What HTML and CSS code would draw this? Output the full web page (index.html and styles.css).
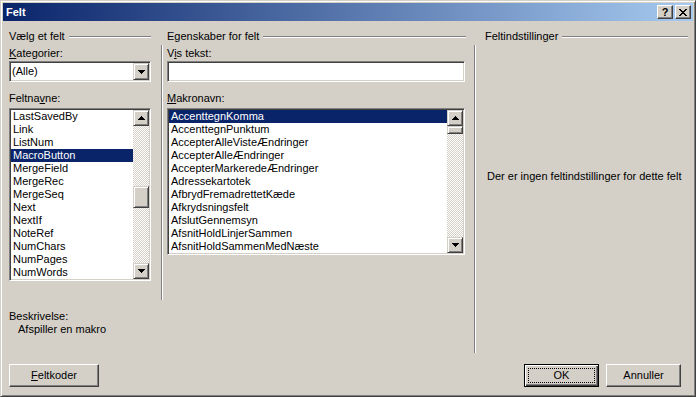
FILE: index.html
```html
<!DOCTYPE html>
<html lang="da">
<head>
    <meta charset="UTF-8">
    <title>Felt</title>
    <link rel="stylesheet" href="styles.css">
</head>
<body>
    <div class="window">
        <div class="titlebar">
            <span class="title">Felt</span>
            <div class="caption-btns">
                <button class="cap-btn help">?</button>
                <button class="cap-btn">
                    <svg width="8" height="7" viewBox="0 0 8 7" shape-rendering="crispEdges"><path d="M0 0h2v1h1v1h2V1h1V0h2v1H7v1H6v1H5v1h1v1h1v1h1v1H6V6H5V5H3v1H2v1H0V6h1V5h1V4h1V3H2V2H1V1H0z" fill="#000"/></svg>
                </button>
            </div>
        </div>

        <div class="content">
            <div class="main">
                <div class="left">
                    <div class="groups">
                        <section class="group group-field">
                            <div class="group-head"><span>Vælg et felt</span><i class="etch"></i></div>
                            <div class="group-body">
                                <div class="label"><u>K</u>ategorier:</div>
                                <div class="combo sunken">
                                    <span class="combo-text">(Alle)</span>
                                    <span class="raised arrow-btn combo-btn">
                                        <svg width="7" height="4" viewBox="0 0 7 4" shape-rendering="crispEdges"><path d="M0 0h7v1H6v1H5v1H4v1H3V3H2V2H1V1H0z"/></svg>
                                    </span>
                                </div>
                                <div class="label label-list">Feltna<u>v</u>ne:</div>
                                <div class="listbox sunken list-fields">
                                    <div class="rows">
                                        <div class="row">LastSavedBy</div>
                                        <div class="row">Link</div>
                                        <div class="row">ListNum</div>
                                        <div class="row selected">MacroButton</div>
                                        <div class="row">MergeField</div>
                                        <div class="row">MergeRec</div>
                                        <div class="row">MergeSeq</div>
                                        <div class="row">Next</div>
                                        <div class="row">NextIf</div>
                                        <div class="row">NoteRef</div>
                                        <div class="row">NumChars</div>
                                        <div class="row">NumPages</div>
                                        <div class="row">NumWords</div>
                                    </div>
                                    <div class="scrollbar">
                                        <span class="raised arrow-btn">
                                            <svg width="7" height="4" viewBox="0 0 7 4" shape-rendering="crispEdges"><path d="M3 0h1v1h1v1h1v1h1v1H0V3h1V2h1V1h1z"/></svg>
                                        </span>
                                        <div class="track"><span class="raised thumb thumb-fields"></span></div>
                                        <span class="raised arrow-btn">
                                            <svg width="7" height="4" viewBox="0 0 7 4" shape-rendering="crispEdges"><path d="M0 0h7v1H6v1H5v1H4v1H3V3H2V2H1V1H0z"/></svg>
                                        </span>
                                    </div>
                                </div>
                            </div>
                        </section>

                        <section class="group group-props">
                            <div class="group-head"><span>Egenskaber for felt</span><i class="etch"></i></div>
                            <div class="group-body">
                                <div class="label">V<u>i</u>s tekst:</div>
                                <div class="textbox sunken"></div>
                                <div class="label label-list"><u>M</u>akronavn:</div>
                                <div class="listbox sunken list-macros">
                                    <div class="rows">
                                        <div class="row selected">AccenttegnKomma</div>
                                        <div class="row">AccenttegnPunktum</div>
                                        <div class="row">AccepterAlleVisteÆndringer</div>
                                        <div class="row">AccepterAlleÆndringer</div>
                                        <div class="row">AccepterMarkeredeÆndringer</div>
                                        <div class="row">Adressekartotek</div>
                                        <div class="row">AfbrydFremadrettetKæde</div>
                                        <div class="row">Afkrydsningsfelt</div>
                                        <div class="row">AfslutGennemsyn</div>
                                        <div class="row">AfsnitHoldLinjerSammen</div>
                                        <div class="row">AfsnitHoldSammenMedNæste</div>
                                    </div>
                                    <div class="scrollbar">
                                        <span class="raised arrow-btn">
                                            <svg width="7" height="4" viewBox="0 0 7 4" shape-rendering="crispEdges"><path d="M3 0h1v1h1v1h1v1h1v1H0V3h1V2h1V1h1z"/></svg>
                                        </span>
                                        <div class="track"><span class="raised thumb thumb-macros"></span></div>
                                        <span class="raised arrow-btn">
                                            <svg width="7" height="4" viewBox="0 0 7 4" shape-rendering="crispEdges"><path d="M0 0h7v1H6v1H5v1H4v1H3V3H2V2H1V1H0z"/></svg>
                                        </span>
                                    </div>
                                </div>
                            </div>
                        </section>
                    </div>

                    <div class="desc">
                        <div>Beskrivelse:</div>
                        <div class="desc-text">Afspiller en makro</div>
                    </div>
                </div>

                <section class="group group-options">
                    <div class="group-head"><span>Feltindstillinger</span><i class="etch"></i></div>
                    <div class="group-body">
                        <div class="no-options">Der er ingen feltindstillinger for dette felt</div>
                    </div>
                </section>
            </div>

            <div class="footer">
                <button class="btn btn-codes"><span><u>F</u>eltkoder</span></button>
                <button class="btn btn-default btn-ok"><span>OK</span></button>
                <button class="btn btn-cancel"><span>Annuller</span></button>
            </div>
        </div>
    </div>
</body>
</html>
```

FILE: styles.css
```css
* {
    box-sizing: border-box;
}
html, body {
    margin: 0;
}
body {
    font: 11px/13px "Liberation Sans", Arial, sans-serif;
    color: #000;
    background: #d4d0c8;
}
.window {
    width: 696px;
    height: 397px;
    padding: 2px;
    background: #d4d0c8;
    border: 1px solid;
    border-color: #d4d0c8 #404040 #404040 #d4d0c8;
    box-shadow: inset 1px 1px #fff, inset -1px -1px #808080;
    display: flex;
    flex-direction: column;
}

/* title bar */
.titlebar {
    height: 18px;
    padding: 0 2px 0 3px;
    display: flex;
    align-items: center;
    background: linear-gradient(to right, #0a246a, #a6caf0);
}
.title {
    color: #fff;
    font-weight: bold;
}
.caption-btns {
    margin-left: auto;
    display: flex;
    gap: 2px;
}
.cap-btn {
    width: 16px;
    height: 14px;
    padding: 0;
    font: bold 11px/1 "Liberation Sans", Arial, sans-serif;
    color: #000;
    background: #d4d0c8;
    border: 1px solid;
    border-color: #fff #404040 #404040 #fff;
    box-shadow: inset -1px -1px #808080;
    display: flex;
    align-items: center;
    justify-content: center;
}

/* 3d bits */
.raised {
    background: #d4d0c8;
    border: 1px solid;
    border-color: #d4d0c8 #404040 #404040 #d4d0c8;
    box-shadow: inset 1px 1px #fff, inset -1px -1px #808080;
}
.sunken {
    background: #fff;
    border: 1px solid;
    border-color: #808080 #fff #fff #808080;
    box-shadow: inset 1px 1px #404040, inset -1px -1px #d4d0c8;
    padding: 1px;
}
.arrow-btn {
    width: 16px;
    height: 16px;
    display: flex;
    align-items: center;
    justify-content: center;
    flex: none;
}

/* layout */
.content {
    flex: 1;
    padding: 9px 5px 0 6px;
    display: flex;
    flex-direction: column;
}
.main {
    height: 323px;
    display: flex;
    gap: 8px;
}
.left {
    width: 457px;
    display: flex;
    flex-direction: column;
}
.groups {
    height: 270px;
    display: flex;
    gap: 10px;
}
.group {
    display: flex;
    flex-direction: column;
}
.group-field { width: 142px; }
.group-props { width: 305px; }
.group-options { width: 214px; }

.group-head {
    height: 13px;
    margin-bottom: 2px;
    display: flex;
    align-items: center;
    gap: 4px;
    white-space: nowrap;
}
.etch {
    flex: 1;
    height: 2px;
    border-top: 1px solid #808080;
    border-bottom: 1px solid #fff;
}
.group-props .group-head { padding-left: 6px; }
.group-options .group-head { padding-left: 11px; }

.group-body {
    flex: 1;
}
.group-props .group-body,
.group-options .group-body {
    border-left: 1px solid #808080;
    box-shadow: inset 1px 0 #fff;
}
.group-props .group-body { padding-left: 5px; }
.group-options .group-body {
    padding: 125px 0 0 12px;
}

.label {
    margin-top: 2px;
}
.label-list {
    margin-top: 10px;
}

.combo {
    margin-top: 1px;
    height: 21px;
    display: flex;
}
.combo-text {
    flex: 1;
    padding-left: 1px;
    line-height: 17px;
}
.combo-btn {
    height: 17px;
}
.textbox {
    margin-top: 1px;
    height: 21px;
    width: 298px;
}

.listbox {
    margin-top: 3px;
    display: flex;
}
.list-fields { height: 173px; }
.list-macros { height: 147px; width: 298px; }
.rows {
    flex: 1;
    overflow: hidden;
}
.row {
    height: 13px;
    padding-left: 2px;
    white-space: nowrap;
}
.row.selected {
    background: #0a246a;
    color: #fff;
}
.scrollbar {
    width: 16px;
    display: flex;
    flex-direction: column;
}
.track {
    flex: 1;
    background: repeating-conic-gradient(#fff 0 25%, #d4d0c8 0 50%) 0 0 / 2px 2px;
}
.thumb {
    display: block;
    width: 16px;
}
.thumb-fields {
    margin-top: 60px;
    height: 22px;
}
.thumb-macros {
    height: 8px;
}

.desc {
    margin-top: 10px;
}
.desc-text {
    padding-left: 9px;
}

.no-options {
    white-space: nowrap;
}

/* buttons */
.footer {
    margin-top: 11px;
    padding-right: 7px;
    display: flex;
}
.btn {
    height: 23px;
    padding: 3px;
    font: inherit;
    color: #000;
    background: #d4d0c8;
    border: 1px solid;
    border-color: #fff #404040 #404040 #fff;
    box-shadow: inset -1px -1px #808080;
    display: flex;
}
.btn span {
    flex: 1;
    border: 1px solid transparent;
    display: flex;
    align-items: center;
    justify-content: center;
}
.btn-codes { width: 90px; }
.btn-ok {
    width: 75px;
    margin-left: auto;
}
.btn-cancel {
    width: 75px;
    margin-left: 7px;
}
.btn-default {
    border-color: #000;
    box-shadow: inset 1px 1px #fff, inset -1px -1px #404040, inset -2px -2px #808080;
}
.btn-default span {
    border: 1px dotted #000;
}
```
